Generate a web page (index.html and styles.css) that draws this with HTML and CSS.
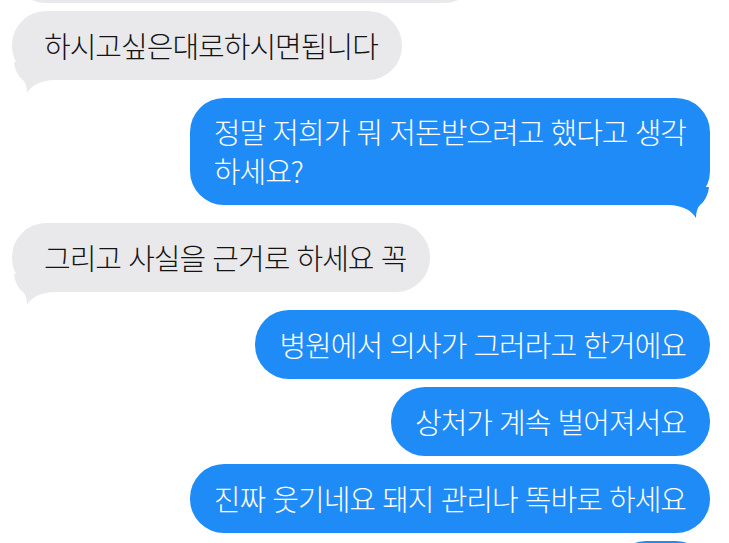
FILE: index.html
```html
<!DOCTYPE html>
<html lang="ko">
<head>
    <meta charset="UTF-8">
    <meta name="viewport" content="width=device-width, initial-scale=1.0">
    <title>메시지</title>
    <link rel="stylesheet" href="styles.css">
</head>
<body>

    <!-- Hilo de mensajes -->
    <div class="thread">

        <div class="row them prev">
            <div class="bubble gray bubble-prev"></div>
        </div>

        <div class="row them">
            <div class="bubble gray">하시고싶은대로하시면됩니다
                <svg class="tail tail-left" width="44" height="32" viewBox="0 0 44 32"><path d="M1,0 C2,9 6,15 10,18 C13,21 14,26 14,31 C18,24 26,19 40,18 L44,18 L44,0 Z"/></svg>
            </div>
        </div>

        <div class="row me turn">
            <div class="bubble blue two-lines">정말 저희가 뭐 저돈받으려고 했다고 생각<br>하세요?
                <svg class="tail tail-right" width="44" height="32" viewBox="0 0 44 32"><path d="M1,0 C2,9 6,15 10,18 C13,21 14,26 14,31 C18,24 26,19 40,18 L44,18 L44,0 Z"/></svg>
            </div>
        </div>

        <div class="row them turn">
            <div class="bubble gray">그리고 사실을 근거로 하세요 꼭
                <svg class="tail tail-left" width="44" height="32" viewBox="0 0 44 32"><path d="M1,0 C2,9 6,15 10,18 C13,21 14,26 14,31 C18,24 26,19 40,18 L44,18 L44,0 Z"/></svg>
            </div>
        </div>

        <div class="row me turn">
            <div class="bubble blue">병원에서 의사가 그러라고 한거에요</div>
        </div>
        <div class="row me">
            <div class="bubble blue">상처가 계속 벌어져서요</div>
        </div>
        <div class="row me">
            <div class="bubble blue">진짜 웃기네요 돼지 관리나 똑바로 하세요</div>
        </div>
        <div class="row me">
            <div class="bubble blue bubble-next"></div>
        </div>

    </div>

</body>
</html>
```

FILE: styles.css
```css
body {
    margin: 0;
    background: #fff;
    font-family: "Noto Sans CJK KR", "Noto Sans", sans-serif;
    overflow: hidden;
}

/* Hilo */
.thread {
    display: flex;
    flex-direction: column;
    padding: 0 19px 0 12px;
}

.row {
    display: flex;
    margin-top: 8px;
}

.row.turn {
    margin-top: 18px;
}

.row.prev {
    margin-top: -66px;
}

.row.them {
    justify-content: flex-start;
}

.row.me {
    justify-content: flex-end;
}

/* Burbujas */
.bubble {
    position: relative;
    padding: 16px 24px;
    border-radius: 34px;
    font-size: 29px;
    font-weight: 300;
    line-height: 37px;
    letter-spacing: -1px;
    white-space: nowrap;
}

.bubble.two-lines {
    padding: 14px 24px 15px;
    line-height: 39px;
}

.gray {
    padding-left: 32px;
    background: #e9e9eb;
    color: #141414;
}

.gray .tail {
    fill: #e9e9eb;
}

.blue {
    background: #1f8bf7;
    color: #fff;
}

.blue .tail {
    fill: #1f8bf7;
}

.bubble-prev {
    width: 410px;
    height: 37px;
}

.bubble-next {
    width: 50px;
    height: 37px;
}

/* Colita de la burbuja */
.tail {
    position: absolute;
    bottom: -14px;
}

.tail-left {
    left: 1px;
}

.tail-right {
    right: 0;
    transform: scaleX(-1);
}
```
